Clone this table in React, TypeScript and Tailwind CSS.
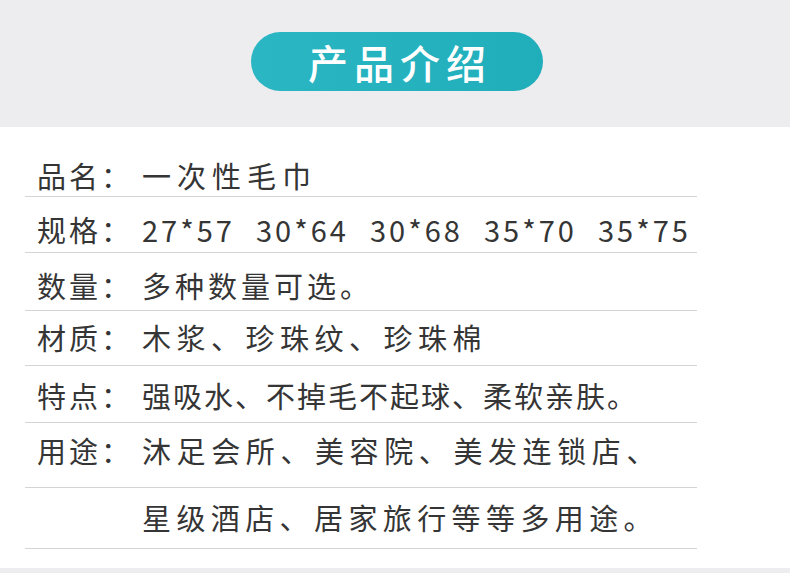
const font = { fontFamily: '"Noto Sans CJK SC", "Noto Sans", sans-serif' };

type Row = {
  label: string;
  value: React.ReactNode;
  h: string;
  pt: string;
  tracking?: string;
};

const sizes = ["27*57", "30*64", "30*68", "35*70", "35*75"];

const rows: Row[] = [
  { label: "品名：", value: "一次性毛巾", h: "h-[70px]", pt: "pt-[34px]", tracking: "tracking-[6px]" },
  {
    label: "规格：",
    value: (
      <span className="flex">
        {sizes.map((s) => (
          <span key={s} className="w-[114px] shrink-0 tracking-[3px]">
            {s}
          </span>
        ))}
      </span>
    ),
    h: "h-[56px]",
    pt: "pt-[18px]",
  },
  { label: "数量：", value: "多种数量可选。", h: "h-[58px]", pt: "pt-[18px]", tracking: "tracking-[4px]" },
  { label: "材质：", value: "木浆、珍珠纹、珍珠棉", h: "h-[55px]", pt: "pt-[12px]", tracking: "tracking-[5.5px]" },
  { label: "特点：", value: "强吸水、不掉毛不起球、柔软亲肤。", h: "h-[57px]", pt: "pt-[15px]", tracking: "tracking-[2px]" },
  { label: "用途：", value: "沐足会所、美容院、美发连锁店、", h: "h-[65px]", pt: "pt-[13px]", tracking: "tracking-[5.6px]" },
  { label: "", value: "星级酒店、居家旅行等等多用途。", h: "h-[61px]", pt: "pt-[15px]", tracking: "tracking-[5.4px]" },
];

export default function App() {
  return (
    <div className="w-[790px] h-[573px] bg-white overflow-hidden flex flex-col" style={font}>
      {/* Header band */}
      <div className="h-[127px] shrink-0 bg-[#edecef] flex justify-center pt-[32px]">
        <div className="ml-[4px] w-[292px] h-[59px] rounded-full bg-gradient-to-r from-[#2ab6c3] to-[#21aebb] flex items-center justify-center">
          <span className="text-white text-[40px] leading-none font-medium tracking-[6px] pl-[6px]">
            产品介绍
          </span>
        </div>
      </div>

      {/* Spec rows */}
      <div className="ml-[25px] w-[672px] flex flex-col">
        {rows.map((r, i) => (
          <div
            key={i}
            className={`${r.h} ${r.pt} flex items-start border-b border-[#d4d4d4] pl-[12px] text-[29px] leading-[28px] text-[#353535]`}
          >
            <span className="w-[105px] shrink-0 tracking-[3px]">{r.label}</span>
            <span className={`whitespace-nowrap ${r.tracking ?? ""}`}>{r.value}</span>
          </div>
        ))}
      </div>

      <div className="flex-1" />
      <div className="h-[5px] shrink-0 bg-[#edecef]" />
    </div>
  );
}
